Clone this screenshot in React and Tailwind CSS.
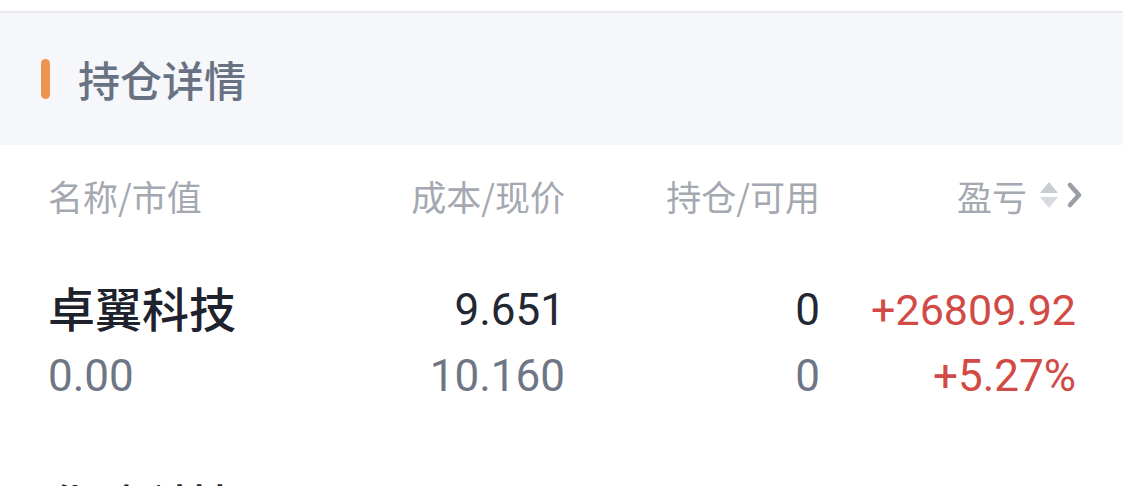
import React from 'react';

const holdings = [
  { name: '卓翼科技', value: '0.00', cost: '9.651', price: '10.160', hold: '0', avail: '0', pnl: '+26809.92', pct: '+5.27%' },
  { name: '华映科技', value: '0.00', cost: '3.210', price: '3.350', hold: '0', avail: '0', pnl: '+1280.00', pct: '+4.36%' },
];

const SortIcon = () => (
  <svg width="20" height="32" viewBox="0 0 20 32" className="ml-[12px]">
    <path d="M10 3 L19 14 L1 14 Z" fill="#c9cdd3" />
    <path d="M10 29 L19 18 L1 18 Z" fill="#d7dade" />
  </svg>
);

const Chevron = () => (
  <svg width="20" height="32" viewBox="0 0 20 32" className="ml-[6px]">
    <path d="M5 6 L14 16 L5 26" fill="none" stroke="#9a9ea6" strokeWidth="4.6" strokeLinecap="round" strokeLinejoin="round" />
  </svg>
);

const cjk = { fontFamily: '"Noto Sans CJK SC", sans-serif' };

export default function App() {
  return (
    <div className="w-[1123px] h-[486px] overflow-hidden bg-white" style={{ fontFamily: 'Roboto, "Noto Sans CJK SC", sans-serif' }}>
      <div className="h-[11px] bg-white" />
      <div className="h-[2px] bg-[#e7e9ee]" />
      {/* section title */}
      <div className="h-[132px] bg-[#f5f7fa] flex items-center pl-[41px]">
        <div className="w-[9px] h-[40px] rounded-full bg-[#eb9550]" />
        <div className="ml-[28px] text-[42px] leading-none text-[#687282] font-medium" style={cjk}>
          持仓详情
        </div>
      </div>

      {/* column headers */}
      <div className="h-[100px] flex items-center pl-[48px] pr-[38px] text-[35px] leading-none text-[#a4a8b0]" style={cjk}>
        <div className="w-[300px]">名称/市值</div>
        <div className="w-[217px] text-right">成本/现价</div>
        <div className="w-[255px] text-right">持仓/可用</div>
        <div className="flex-1 flex items-center justify-end">
          <span>盈亏</span>
          <SortIcon />
          <Chevron />
        </div>
      </div>

      {holdings.map((h, i) => (
        <div key={i} className="pl-[48px] pr-[47px] pt-[34px] pb-[31px]">
          <div className="flex items-center h-[62px]">
            <div className="w-[300px] text-[47px] leading-none font-medium text-[#1e222c] -mt-[8px]" style={cjk}>{h.name}</div>
            <div className="w-[217px] text-right text-[44px] leading-none text-[#232733]">{h.cost}</div>
            <div className="w-[255px] text-right text-[44px] leading-none text-[#232733]">{h.hold}</div>
            <div className="flex-1 text-right text-[43px] leading-none text-[#d24a45]">{h.pnl}</div>
          </div>
          <div className="flex items-center h-[70px]">
            <div className="w-[300px] text-[44px] leading-none text-[#6e7686]">{h.value}</div>
            <div className="w-[217px] text-right text-[44px] leading-none text-[#6e7686]">{h.price}</div>
            <div className="w-[255px] text-right text-[44px] leading-none text-[#6e7686]">{h.avail}</div>
            <div className="flex-1 text-right text-[44px] leading-none text-[#d24a45]">{h.pct}</div>
          </div>
        </div>
      ))}
    </div>
  );
}
